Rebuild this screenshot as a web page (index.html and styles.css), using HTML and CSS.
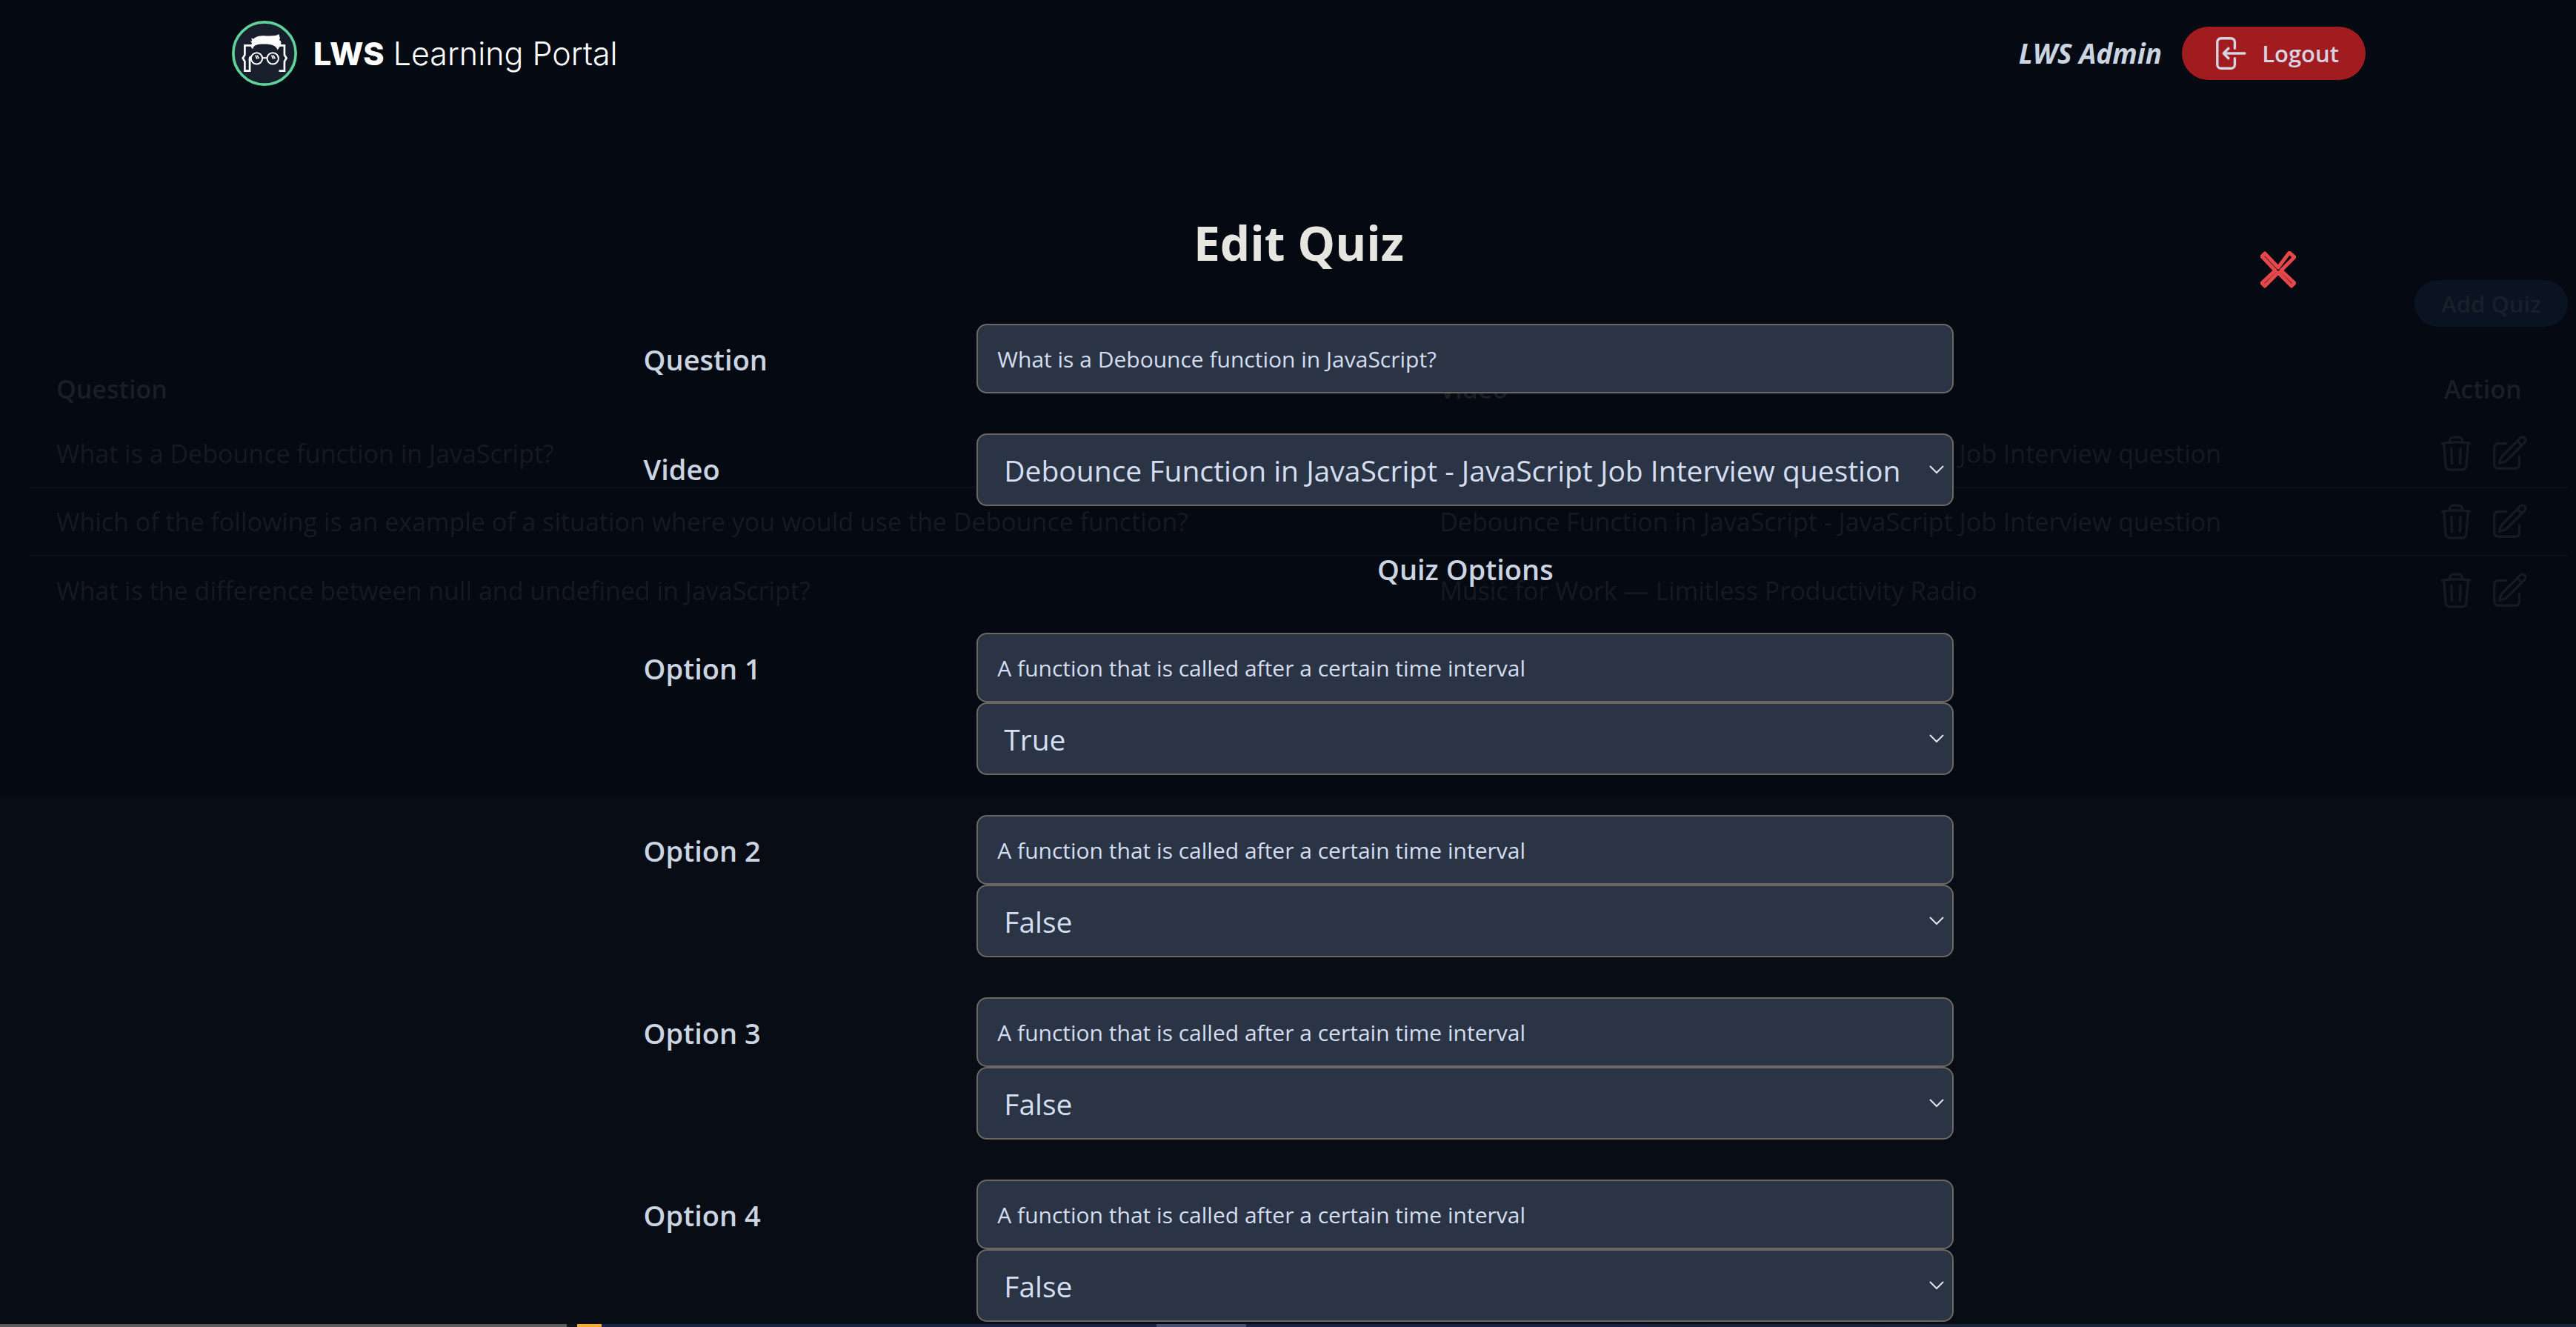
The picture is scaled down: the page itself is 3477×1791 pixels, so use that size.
FILE: index.html
```
<!DOCTYPE html>
<html lang="en">
<head>
<meta charset="utf-8">
<meta name="viewport" content="width=device-width, initial-scale=1">
<title>LWS Learning Portal - Edit Quiz</title>
<link rel="stylesheet" href="styles.css">
</head>
<body>
<svg class="sprite" aria-hidden="true">
  <symbol id="icon-trash" viewBox="0 0 24 24"><path d="M14.74 9l-.346 9m-4.788 0L9.26 9m9.968-3.21c.342.052.682.107 1.022.166m-1.022-.165L18.16 19.673a2.25 2.25 0 01-2.244 2.077H8.084a2.25 2.25 0 01-2.244-2.077L4.772 5.79m14.456 0a48.108 48.108 0 00-3.478-.397m-12 .562c.34-.059.68-.114 1.022-.165m0 0a48.11 48.11 0 013.478-.397m7.5 0v-.916c0-1.18-.91-2.164-2.09-2.201a51.964 51.964 0 00-3.32 0c-1.18.037-2.09 1.022-2.09 2.201v.916m7.5 0a48.667 48.667 0 00-7.5 0"/></symbol>
  <symbol id="icon-edit" viewBox="0 0 24 24"><path d="M16.862 4.487l1.687-1.688a1.875 1.875 0 112.652 2.652L10.582 16.07a4.5 4.5 0 01-1.897 1.13L6 18l.8-2.685a4.5 4.5 0 011.13-1.897l8.932-8.931zm0 0L19.5 7.125M18 14v4.75A2.25 2.25 0 0115.75 21H5.25A2.25 2.25 0 013 18.75V8.25A2.25 2.25 0 015.25 6H10"/></symbol>
  <symbol id="icon-chevron" viewBox="0 0 20 12"><path d="M1 1l9 9 9-9"/></symbol>
</svg>

<header class="header">
  <div class="header-inner">
    <a class="brand" href="#">
      <svg class="logo" viewBox="23 24 263 263" aria-hidden="true">
        <circle cx="154.500" cy="155.500" r="126" fill="#171e2c" stroke="#5fd39a" stroke-width="11"/>
        <path fill="#fff" d="M97 103l7 5-2-15 8 5c9-10 25-14 50-13 25 1 43 0 53-7l4 17-3 7c8 3 9 12 6 16l7 3-9 6c-4 4-9 10-10 16-7-18-20-25-56-25-30 0-41 5-45 20-8-5-10-17-3-22z"/>
        <g fill="none" stroke="#fff" stroke-width="8">
          <path d="M104 124H75v38l-8 13 8 13v38h20v-40q-2-14 4-16M210 124h25v38l8 13-8 13v38h-22"/>
          <g stroke-width="6"><circle cx="123" cy="176" r="23"/><circle cx="188" cy="176" r="23"/><path d="M146 174h19"/></g>
          <path stroke-width="5" d="M118 163l7 15m0-15l7 14M183 163l7 15m0-15l7 14"/>
        </g>
      </svg>
      <span class="brand-name"><strong>LWS</strong> Learning Portal</span>
    </a>
    <div class="account">
      <span class="user">LWS Admin</span>
      <button class="logout" type="button">
        <svg class="icon" viewBox="0 0 24 24" aria-hidden="true"><path d="M15.750 9V5.250A2.250 2.250 0 0013.500 3h-6a2.250 2.250 0 00-2.250 2.250v13.500A2.250 2.250 0 007.500 21h6a2.250 2.250 0 002.250-2.250V15M12 9l-3 3m0 0l3 3m-3-3h12.750"/></svg>
        Logout
      </button>
    </div>
  </div>
</header>

<main class="main">
  <section class="panel">
    <button class="add" type="button">Add Quiz</button>
    <table class="quizzes">
      <thead><tr><th class="col-question">Question</th><th class="col-video">Video</th><th class="col-action">Action</th></tr></thead>
      <tbody>
        <tr><td>What is a Debounce function in JavaScript?</td><td>Debounce Function in JavaScript - JavaScript Job Interview question</td><td><div class="actions"><svg class="icon"><use href="#icon-trash"/></svg><svg class="icon"><use href="#icon-edit"/></svg></div></td></tr>
        <tr><td>Which of the following is an example of a situation where you would use the Debounce function?</td><td>Debounce Function in JavaScript - JavaScript Job Interview question</td><td><div class="actions"><svg class="icon"><use href="#icon-trash"/></svg><svg class="icon"><use href="#icon-edit"/></svg></div></td></tr>
        <tr><td>What is the difference between null and undefined in JavaScript?</td><td>Music for Work — Limitless Productivity Radio</td><td><div class="actions"><svg class="icon"><use href="#icon-trash"/></svg><svg class="icon"><use href="#icon-edit"/></svg></div></td></tr>
      </tbody>
    </table>
  </section>

  <div class="modal" role="dialog" aria-labelledby="modal-title">
    <button class="close" type="button" aria-label="Close">
      <svg viewBox="0 0 48 50" aria-hidden="true"><path d="M2 7l4-4 18 19L39 2l7 6-18 18 18 17-4 4-18-18L6 47l-4-4 18-17z"/></svg>
    </button>
    <h1 class="title" id="modal-title">Edit Quiz</h1>
    <form class="form">
      <div class="row">
        <label for="question">Question</label>
        <div class="fields"><input class="field" id="question" type="text" value="What is a Debounce function in JavaScript?"></div>
      </div>
      <div class="row">
        <label for="video">Video</label>
        <div class="fields">
          <div class="select"><select class="field" id="video"><option>Debounce Function in JavaScript - JavaScript Job Interview question</option></select><svg class="chevron"><use href="#icon-chevron"/></svg></div>
        </div>
      </div>
      <div class="row"><h2 class="subtitle">Quiz Options</h2></div>
      <div class="row">
        <label for="option1">Option 1</label>
        <div class="fields">
          <input class="field" id="option1" type="text" value="A function that is called after a certain time interval">
          <div class="select"><select class="field" aria-label="Option 1 is correct"><option selected>True</option><option>False</option></select><svg class="chevron"><use href="#icon-chevron"/></svg></div>
        </div>
      </div>
      <div class="row">
        <label for="option2">Option 2</label>
        <div class="fields">
          <input class="field" id="option2" type="text" value="A function that is called after a certain time interval">
          <div class="select"><select class="field" aria-label="Option 2 is correct"><option>True</option><option selected>False</option></select><svg class="chevron"><use href="#icon-chevron"/></svg></div>
        </div>
      </div>
      <div class="row">
        <label for="option3">Option 3</label>
        <div class="fields">
          <input class="field" id="option3" type="text" value="A function that is called after a certain time interval">
          <div class="select"><select class="field" aria-label="Option 3 is correct"><option>True</option><option selected>False</option></select><svg class="chevron"><use href="#icon-chevron"/></svg></div>
        </div>
      </div>
      <div class="row">
        <label for="option4">Option 4</label>
        <div class="fields">
          <input class="field" id="option4" type="text" value="A function that is called after a certain time interval">
          <div class="select"><select class="field" aria-label="Option 4 is correct"><option>True</option><option selected>False</option></select><svg class="chevron"><use href="#icon-chevron"/></svg></div>
        </div>
      </div>
    </form>
  </div>
</main>

<div class="taskbar" aria-hidden="true"><i class="task-search"></i><i class="task-badge"></i><i class="task-gap"></i><i class="task-active"></i></div>
</body>
</html>
```
FILE: styles.css
```
* { box-sizing: border-box; }

body {
  margin: 0;
  min-height: 100vh;
  padding-left: 29px;
  display: flex;
  flex-direction: column;
  overflow: hidden;
  background: #070c15;
  color: #cbd5e1;
  font-family: "Segoe UI", "Open Sans", sans-serif;
}

button, input, select { font: inherit; color: inherit; }
button { border: 0; cursor: pointer; }
.sprite { position: absolute; width: 0; height: 0; }
.icon {
  width: 54px;
  height: 54px;
  fill: none;
  stroke: currentColor;
  stroke-width: 1.5;
  stroke-linecap: round;
  stroke-linejoin: round;
}

/* Header */
.header { height: 144px; background: #050a13; margin-left: -29px; padding-left: 29px; }
.header-inner {
  max-width: 2880px;
  height: 100%;
  margin: 0 auto;
  display: flex;
  align-items: center;
  justify-content: space-between;
}
.brand { display: flex; align-items: center; gap: 22px; color: #fff; text-decoration: none; }
.logo { width: 88px; height: 88px; }
.brand-name { font: 300 43px/60px Inter, sans-serif; }
.brand-name strong { font-weight: 800; }
.account { display: flex; align-items: center; gap: 27px; }
.user { font-size: 37px; line-height: 54px; font-weight: 700; font-style: italic; }
.logout {
  height: 72px;
  padding: 0 36px;
  display: flex;
  align-items: center;
  gap: 18px;
  border-radius: 36px;
  background: #a01c1e;
  color: #d8d3e3;
  font-size: 31px;
  font-weight: 600;
}

/* Quiz list behind the dialog */
.main { position: relative; flex: 1; margin-left: -29px; padding-left: 29px; }
.panel {
  height: 931px;
  margin-left: -29px;
  padding: 234px 11px 0 40px;
  display: flex;
  flex-direction: column;
  background: #050912;
  color: #161a21;
}
.add {
  align-self: flex-end;
  height: 63px;
  margin-bottom: 42px;
  padding: 0 36px;
  border-radius: 32px;
  background: #091322;
  color: #1a202a;
  font-size: 31px;
  font-weight: 600;
}
.quizzes { width: 100%; table-layout: fixed; border-collapse: collapse; font-size: 34px; line-height: 56px; }
.quizzes th, .quizzes td { height: 92px; padding: 0 36px; text-align: left; white-space: nowrap; }
.quizzes th { height: 83px; color: #1a1e26; font-size: 34px; font-weight: 600; }
.quizzes td { border-bottom: 2px solid #0b0e17; }
.quizzes tr:last-child td { border-bottom: 0; }
.col-question { width: 54.5%; }
.col-video { width: 38.8%; }
.quizzes .col-action { text-align: center; }
.actions { display: flex; justify-content: center; gap: 18px; }

/* Edit dialog */
.modal { position: absolute; inset: 0 0 0 29px; padding-top: 140px; }
.close { position: absolute; top: 195px; right: 378px; width: 48px; height: 50px; padding: 0; background: none; }
.close svg { display: block; width: 48px; height: 50px; fill: none; stroke: #e5484b; stroke-width: 5; stroke-linejoin: round; }
.title { margin: 0 0 65px; color: #e7e5e0; font-size: 64px; line-height: 88px; font-weight: 700; text-align: center; }
.form { width: 51.3%; margin: 0 auto; display: flex; flex-direction: column; gap: 54px; }
.row { display: grid; grid-template-columns: 15fr 44fr; }
.row label { font-size: 38px; line-height: 96px; font-weight: 600; height: 94px; }
.subtitle { grid-column: 2; margin: 0; font-size: 38px; line-height: 63px; font-weight: 600; text-align: center; }
.fields { display: flex; flex-direction: column; min-width: 0; }
.field {
  display: block;
  width: 100%;
  height: 94px;
  padding: 0 26px;
  border: 2px solid #6a6762;
  border-radius: 14px;
  background: #2b3444;
  color: #d4def0;
  font-size: 30px;
}
.select { display: grid; align-items: center; }
.select .field { grid-area: 1 / 1; height: 98px; padding: 0 35px; font-size: 39px; appearance: none; }
.chevron {
  grid-area: 1 / 1;
  justify-self: end;
  width: 20px;
  height: 12px;
  margin-right: 13px;
  fill: none;
  stroke: #dfe5ee;
  stroke-width: 2;
  pointer-events: none;
}

/* Top edge of the desktop taskbar */
.taskbar { position: fixed; inset: auto 0 0; height: 4px; display: flex; background: linear-gradient(90deg, #1a2444 60%, #1a263a 80%); }
.taskbar i { height: 4px; }
.task-search { width: 22%; background: #5c5c5e; }
.task-badge { width: 47px; background: linear-gradient(90deg, #10141d 14px, #fbab2c 14px); }
.task-gap { width: 749px; }
.task-active { width: 121px; background: #465070; }
```
